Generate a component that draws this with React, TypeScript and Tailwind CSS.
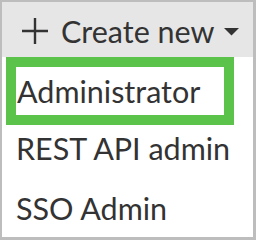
import React from 'react';

const PlusIcon = () => (
  <svg width="26" height="26" viewBox="0 0 26 26" className="mb-[2px] shrink-0">
    <path d="M13 0V26M0 13H26" stroke="#333" strokeWidth="2.4" fill="none" />
  </svg>
);

const Caret = () => (
  <svg width="15" height="8" viewBox="0 0 15 8" className="shrink-0">
    <path d="M0 0H15L7.5 7.5Z" fill="#333" />
  </svg>
);

const App: React.FC = () => {
  return (
    <div
      className="w-[256px] h-[240px] bg-white border-t-[2px] border-l-[2px] border-r-[3px] border-b-[3px] border-[#bdbdbd] text-[#333] overflow-hidden"
      style={{ fontFamily: 'Lato, "Open Sans", sans-serif' }}
    >
      <div className="h-[55px] bg-[#e6e6e6] flex items-center pt-[11px] pb-[7px] pl-[20px] pr-[14px]">
        <PlusIcon />
        <span className="ml-[13px] text-[30.5px] leading-[37px]">Create new</span>
        <span className="ml-auto">
          <Caret />
        </span>
      </div>
      <div className="ml-[4px] w-[228px] h-[68px] border-[10px] border-[#5cc34a] pt-[6px] pl-[1px] text-[30.5px] leading-[37px]">
        Administrator
      </div>
      <div className="pl-[14px] pt-[5px] text-[30.5px] leading-[37px]">REST API admin</div>
      <div className="pl-[14px] pt-[23px] text-[30.5px] leading-[37px]">SSO Admin</div>
    </div>
  );
};

export default App;
